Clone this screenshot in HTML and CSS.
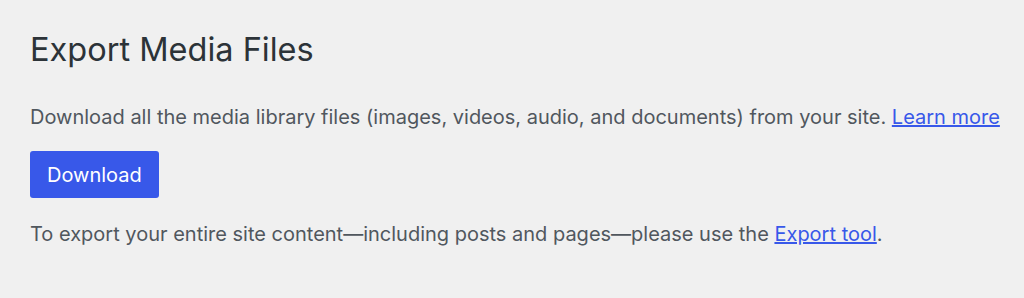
FILE: index.html
```html
<!DOCTYPE html>
<html lang="en">
<head>
    <meta charset="UTF-8">
    <meta name="viewport" content="width=device-width, initial-scale=1.0">
    <title>Export Media Files</title>
    <link rel="stylesheet" href="styles.css">
</head>
<body>

    <div class="export-media">
        <h1>Export Media Files</h1>
        <p>Download all the media library files (images, videos, audio, and documents) from your site. <a href="#">Learn more</a></p>
        <button class="download-btn">Download</button>
        <p class="note">To export your entire site content&mdash;including posts and pages&mdash;please use the <a href="#">Export tool</a>.</p>
    </div>

</body>
</html>
```

FILE: styles.css
```css
body {
    font-family: Inter, "Noto Sans", sans-serif;
    background-color: #f0f0f0;
    margin: 0;
    padding: 0;
}
.export-media {
    padding: 30px 10px 30px 30px;
}
h1 {
    font-size: 32.5px;
    font-weight: 400;
    color: #2c3338;
    margin: 0 0 33px;
    line-height: 1.2;
}
p {
    font-size: 20px;
    color: #50575e;
    margin: 0;
    line-height: 1.5;
}
a {
    color: #3858e9;
}
.download-btn {
    display: block;
    margin: 19px 0 21px;
    height: 47px;
    padding: 0 17px;
    font-family: inherit;
    font-size: 20px;
    color: white;
    background-color: #3858e9;
    border: none;
    border-radius: 3px;
    cursor: pointer;
}
```
